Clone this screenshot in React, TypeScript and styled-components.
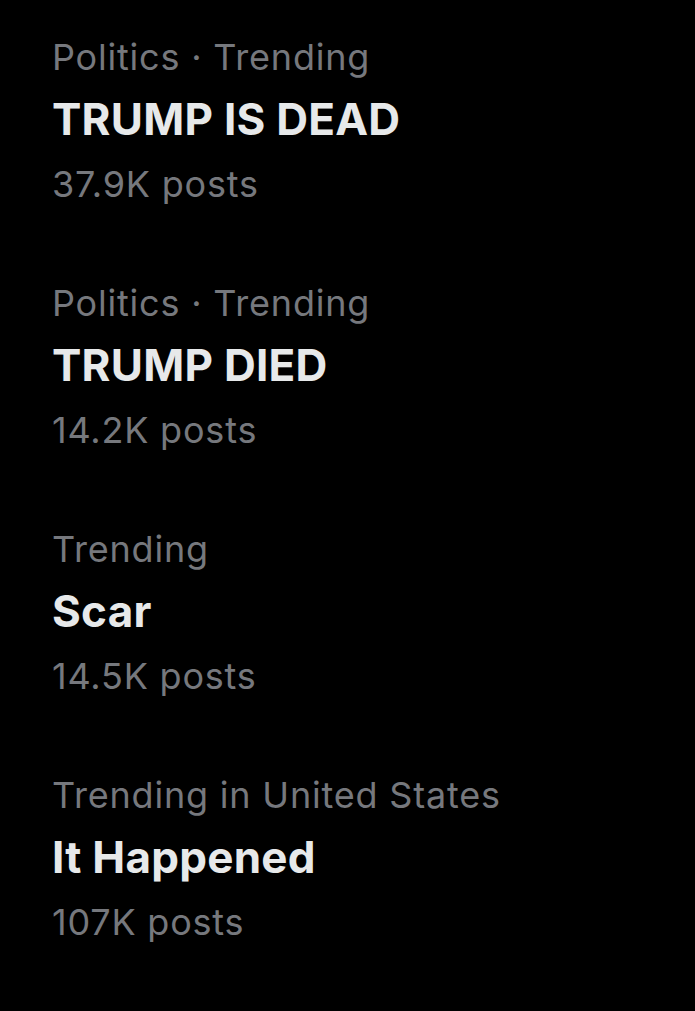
import styled, { createGlobalStyle } from "styled-components";

type Trend = {
  context: string;
  title: string;
  posts: string;
};

const trends: Trend[] = [
  { context: "Politics · Trending", title: "TRUMP IS DEAD", posts: "37.9K posts" },
  { context: "Politics · Trending", title: "TRUMP DIED", posts: "14.2K posts" },
  { context: "Trending", title: "Scar", posts: "14.5K posts" },
  { context: "Trending in United States", title: "It Happened", posts: "107K posts" },
];

export default function App() {
  return (
    <>
      <GlobalStyle />
      <Page>
        <List>
          {trends.map((trend, i) => (
            <Item key={i}>
              <Meta>{trend.context}</Meta>
              <Title>{trend.title}</Title>
              <Posts>{trend.posts}</Posts>
            </Item>
          ))}
        </List>
      </Page>
    </>
  );
}

const GlobalStyle = createGlobalStyle`
  html, body {
    margin: 0;
    padding: 0;
    background: #000;
  }
  body {
    font-family: Inter, "Noto Sans", "Liberation Sans", sans-serif;
    -webkit-font-smoothing: antialiased;
  }
`;

const Page = styled.div`
  min-height: 1011px;
  background: #000;
`;

const List = styled.ul`
  list-style: none;
  margin: 0;
  padding: 35px 0 0 52px;
  display: flex;
  flex-direction: column;
  gap: 75px;
`;

const Item = styled.li`
  display: flex;
  flex-direction: column;
`;

const Meta = styled.div`
  color: #76787d;
  font-size: 36px;
  line-height: 44px;
  font-weight: 400;
  letter-spacing: 0.8px;
`;

const Title = styled.div`
  margin-top: 13px;
  color: #e7e9ea;
  font-size: 44px;
  line-height: 54px;
  font-weight: 700;
  letter-spacing: 0.25px;
`;

const Posts = styled(Meta)`
  margin-top: 16px;
`;
